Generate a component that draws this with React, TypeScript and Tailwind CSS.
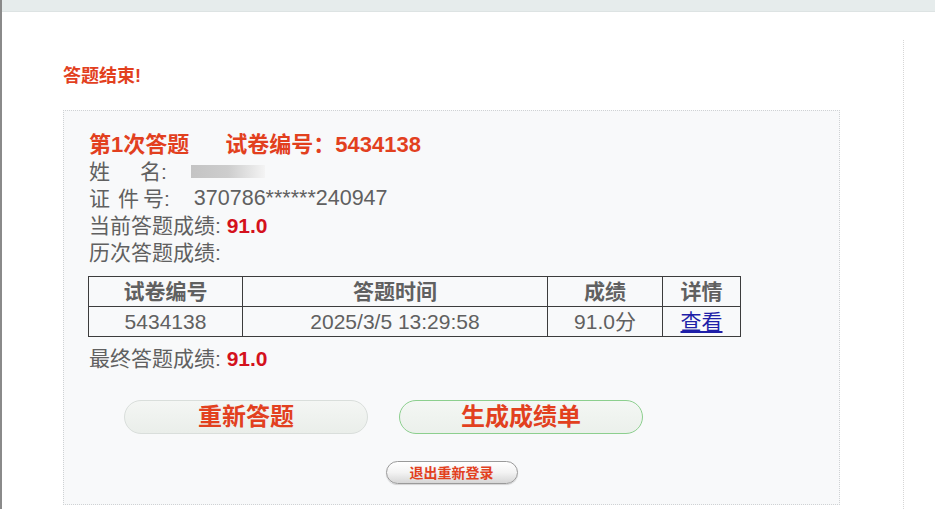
import React from "react";

const font = { fontFamily: '"Liberation Sans", "Noto Sans CJK SC", sans-serif' };

export default function App() {
    return (
        <div className="w-[935px] h-[509px] overflow-hidden bg-white border-l-2 border-[#8a8a8a] flex flex-col" style={font}>
            {/* Top strip */}
            <div className="h-[12px] shrink-0 bg-[#e6ecec] border-b border-[#dde3e3]" />

            <div className="flex flex-1">
                {/* Main column */}
                <div className="w-[901px] pl-[61px] pt-[53px]">
                    <h2 className="text-[18px] leading-[22px] font-bold text-[#e2401e]">答题结束!</h2>

                    {/* Result panel */}
                    <div className="mt-[23px] w-[777px] h-[395px] border border-dotted border-[#cfd2d4] bg-[#f8f9fa] pl-[25px] pt-[20px]">
                        <div className="text-[22px] leading-[27px] font-bold text-[#e2401e] flex">
                            <span>第1次答题</span>
                            <span className="ml-[36px]">试卷编号：5434138</span>
                        </div>

                        <div className="text-[21px] leading-[27px] text-[#606060]">
                            <div className="flex items-center">
                                <span className="mr-[30px]">姓</span>
                                <span>名:</span>
                                {/* blurred name */}
                                <span className="ml-[24px] h-[13px] w-[74px] bg-gradient-to-r from-[#c4c4c4] via-[#cdcdcd] to-[#f4f4f4]" />
                            </div>
                            <div className="flex">
                                <span className="mr-[8px]">证</span>
                                <span className="mr-[4px]">件</span>
                                <span>号:</span>
                                <span className="ml-[24px] text-[21.5px]">370786******240947</span>
                            </div>
                            <div>
                                当前答题成绩: <span className="font-bold text-[#d4111c]">91.0</span>
                            </div>
                            <div>历次答题成绩:</div>
                        </div>

                        <table className="mt-[10px] w-[653px] -ml-px border-collapse text-[21px] text-[#606060]">
                            <thead>
                                <tr className="h-[30px] leading-[28px]">
                                    <th className="w-[154px] border border-[#3c3c3c] font-bold">试卷编号</th>
                                    <th className="w-[305px] border border-[#3c3c3c] font-bold">答题时间</th>
                                    <th className="w-[115px] border border-[#3c3c3c] font-bold">成绩</th>
                                    <th className="border border-[#3c3c3c] font-bold">详情</th>
                                </tr>
                            </thead>
                            <tbody>
                                <tr className="h-[30px] leading-[28px] text-center">
                                    <td className="border border-[#3c3c3c]">5434138</td>
                                    <td className="border border-[#3c3c3c]">2025/3/5 13:29:58</td>
                                    <td className="border border-[#3c3c3c]">91.0分</td>
                                    <td className="border border-[#3c3c3c]">
                                        <a className="text-[#1f1fa8] underline">查看</a>
                                    </td>
                                </tr>
                            </tbody>
                        </table>

                        <div className="mt-[8px] text-[21px] leading-[27px] text-[#606060]">
                            最终答题成绩: <span className="font-bold text-[#d4111c]">91.0</span>
                        </div>

                        <div className="mt-[28px] ml-[35px] flex gap-[31px]">
                            <button className="w-[244px] h-[34px] rounded-full border border-[#d9dedb] bg-gradient-to-b from-[#f4f6f4] to-[#eaeeea] text-[24px] font-bold text-[#e2401e] leading-none">
                                重新答题
                            </button>
                            <button className="w-[244px] h-[34px] rounded-full border border-[#8ccf8e] bg-gradient-to-b from-[#f4f7f4] to-[#ebf0eb] text-[24px] font-bold text-[#e2401e] leading-none">
                                生成成绩单
                            </button>
                        </div>

                        <div className="mt-[27px] -ml-[25px] flex justify-center">
                            <button className="w-[132px] h-[23px] rounded-full border border-[#9a9a9a] bg-gradient-to-b from-white via-[#f3f3f3] to-[#d6d6d6] text-[14px] font-bold text-[#e2401e] leading-none shadow-[0_1px_1px_rgba(0,0,0,0.15)]">
                                退出重新登录
                            </button>
                        </div>
                    </div>
                </div>

                {/* Right divider */}
                <div className="mt-[28px] border-l border-dotted border-[#d6d6d6]" />
            </div>
        </div>
    );
}
